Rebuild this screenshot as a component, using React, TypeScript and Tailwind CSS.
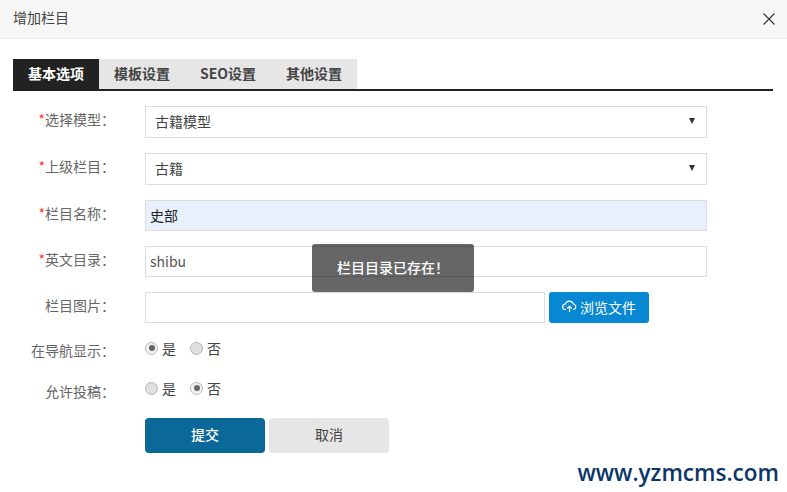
const font = '"Noto Sans CJK SC", "Noto Sans", sans-serif'

function Label({ text, required, className }: { text: string; required?: boolean; className: string }) {
  return (
    <label className={`w-[115px] shrink-0 text-right text-sm text-[#666] ${className}`}>
      {required && <span className="text-[#ff3333]">*</span>}
      {text}：
    </label>
  )
}

function SelectBox({ value }: { value: string }) {
  return (
    <div className="relative ml-[30px] w-[562px]">
      <select
        defaultValue={value}
        className="h-[32px] w-full appearance-none border border-[#dcdcdc] bg-white pb-[2px] pl-[9px] text-sm text-[#444] outline-none"
      >
        <option>{value}</option>
      </select>
      {/* arrow */}
      <svg width="6" height="6" viewBox="0 0 6 6" className="absolute right-[12px] top-[12px] text-[#333]">
        <path d="M0 0h6L3 6z" fill="currentColor" />
      </svg>
    </div>
  )
}

function Radio({ text, checked }: { text: string; checked?: boolean }) {
  return (
    <span className="flex items-center gap-[4px] text-sm text-[#444]">
      <span className="flex h-[13px] w-[13px] items-center justify-center rounded-full border border-[#b4b4b4] bg-[#e0e0e0]">
        {checked && (
          <span className="flex h-[11px] w-[11px] items-center justify-center rounded-full bg-[#f0f0f0]">
            <span className="h-[6px] w-[6px] rounded-full bg-[#666]" />
          </span>
        )}
      </span>
      {text}
    </span>
  )
}

export default function App() {
  return (
    <div className="relative h-[492px] w-[787px] overflow-hidden bg-white" style={{ fontFamily: font }}>
      {/* title bar */}
      <div className="flex h-[39px] items-center justify-between border-b border-[#eee] bg-[#f7f7f7] pl-[13px] pr-[11px]">
        <span className="pb-[5px] text-sm leading-none text-[#444]">增加栏目</span>
        <svg width="14" height="14" viewBox="0 0 14 14" className="text-[#333]">
          <path d="M1.5 1.5l11 11M12.5 1.5l-11 11" stroke="currentColor" strokeWidth="1.1" fill="none" />
        </svg>
      </div>

      {/* tabs */}
      <div className="ml-[13px] mr-[14px] mt-[20px] flex h-[32px] border-b-2 border-[#222] text-sm font-bold leading-[28px]">
        <div className="w-[86px] bg-[#222] text-center text-white">基本选项</div>
        <div className="w-[86px] bg-[#e6e6e6] text-center text-[#444]">模板设置</div>
        <div className="w-[86px] bg-[#e6e6e6] text-center text-[#444]">SEO设置</div>
        <div className="w-[86px] bg-[#e6e6e6] text-center text-[#444]">其他设置</div>
      </div>

      {/* form */}
      <div className="mt-[15px] flex flex-col">
        <div className="flex h-[32px] items-center">
          <Label text="选择模型" required className="pb-[6px]" />
          <SelectBox value="古籍模型" />
        </div>
        <div className="mt-[15px] flex h-[32px] items-center">
          <Label text="上级栏目" required className="pb-[6px]" />
          <SelectBox value="古籍" />
        </div>
        <div className="mt-[15px] flex h-[31px] items-center">
          <Label text="栏目名称" required className="pb-[6px]" />
          <input
            readOnly
            value="史部"
            className="ml-[30px] h-[31px] w-[562px] border border-[#dcdcdc] bg-[#e8f0fe] pb-[2px] pl-[4px] text-sm text-[#222] outline-none"
          />
        </div>
        <div className="mt-[15px] flex h-[31px] items-center">
          <Label text="英文目录" required className="pb-[6px]" />
          <input
            readOnly
            value="shibu"
            className="ml-[30px] h-[31px] w-[562px] border border-[#dcdcdc] bg-white pb-[2px] pl-[4px] text-sm text-[#555] outline-none"
          />
        </div>
        <div className="mt-[15px] flex h-[31px] items-center">
          <Label text="栏目图片" className="pb-[6px]" />
          <input readOnly className="ml-[30px] h-[31px] w-[400px] border border-[#dcdcdc] bg-white outline-none" />
          <button className="ml-[4px] flex h-[31px] w-[100px] items-center justify-center gap-[3px] rounded-[3px] bg-[#0888d2] pb-[2px] text-sm text-white">
            <svg width="15" height="13" viewBox="0 0 15 13" fill="none" stroke="currentColor" strokeWidth="1.2">
              <path d="M4 9.5H3.5A2.7 2.7 0 0 1 3.2 4.1 4.3 4.3 0 0 1 11.4 4 2.8 2.8 0 0 1 11.5 9.5H11" />
              <path d="M7.5 12V6.5M5.2 8.5l2.3-2.3 2.3 2.3" />
            </svg>
            浏览文件
          </button>
        </div>
        <div className="mt-[14px] flex h-[22px] items-center">
          <Label text="在导航显示" className="pt-[4px]" />
          <div className="ml-[30px] flex gap-[14px]">
            <Radio text="是" checked />
            <Radio text="否" />
          </div>
        </div>
        <div className="mt-[18px] flex h-[22px] items-center">
          <Label text="允许投稿" className="pt-[6px]" />
          <div className="ml-[30px] flex gap-[14px]">
            <Radio text="是" />
            <Radio text="否" checked />
          </div>
        </div>
        <div className="ml-[145px] mt-[19px] flex gap-[4px] text-sm">
          <button className="h-[35px] w-[120px] rounded-[4px] bg-[#0a6999] pb-[3px] font-medium text-white">提交</button>
          <button className="h-[35px] w-[120px] rounded-[4px] bg-[#e6e6e6] pb-[3px] text-[#444]">取消</button>
        </div>
      </div>

      {/* toast */}
      <div className="absolute left-[312px] top-[244px] flex h-[48px] w-[162px] items-center justify-center rounded-[3px] bg-black/60 pb-[2px] text-sm font-medium text-white">
        栏目目录已存在！
      </div>

      {/* watermark */}
      <div
        className="absolute right-[8px] top-[460px] text-[22.5px] font-semibold leading-[26px] text-[#0b3668]"
        style={{ fontFamily: '"Open Sans", sans-serif' }}
      >
        www.yzmcms.com
      </div>
    </div>
  )
}
